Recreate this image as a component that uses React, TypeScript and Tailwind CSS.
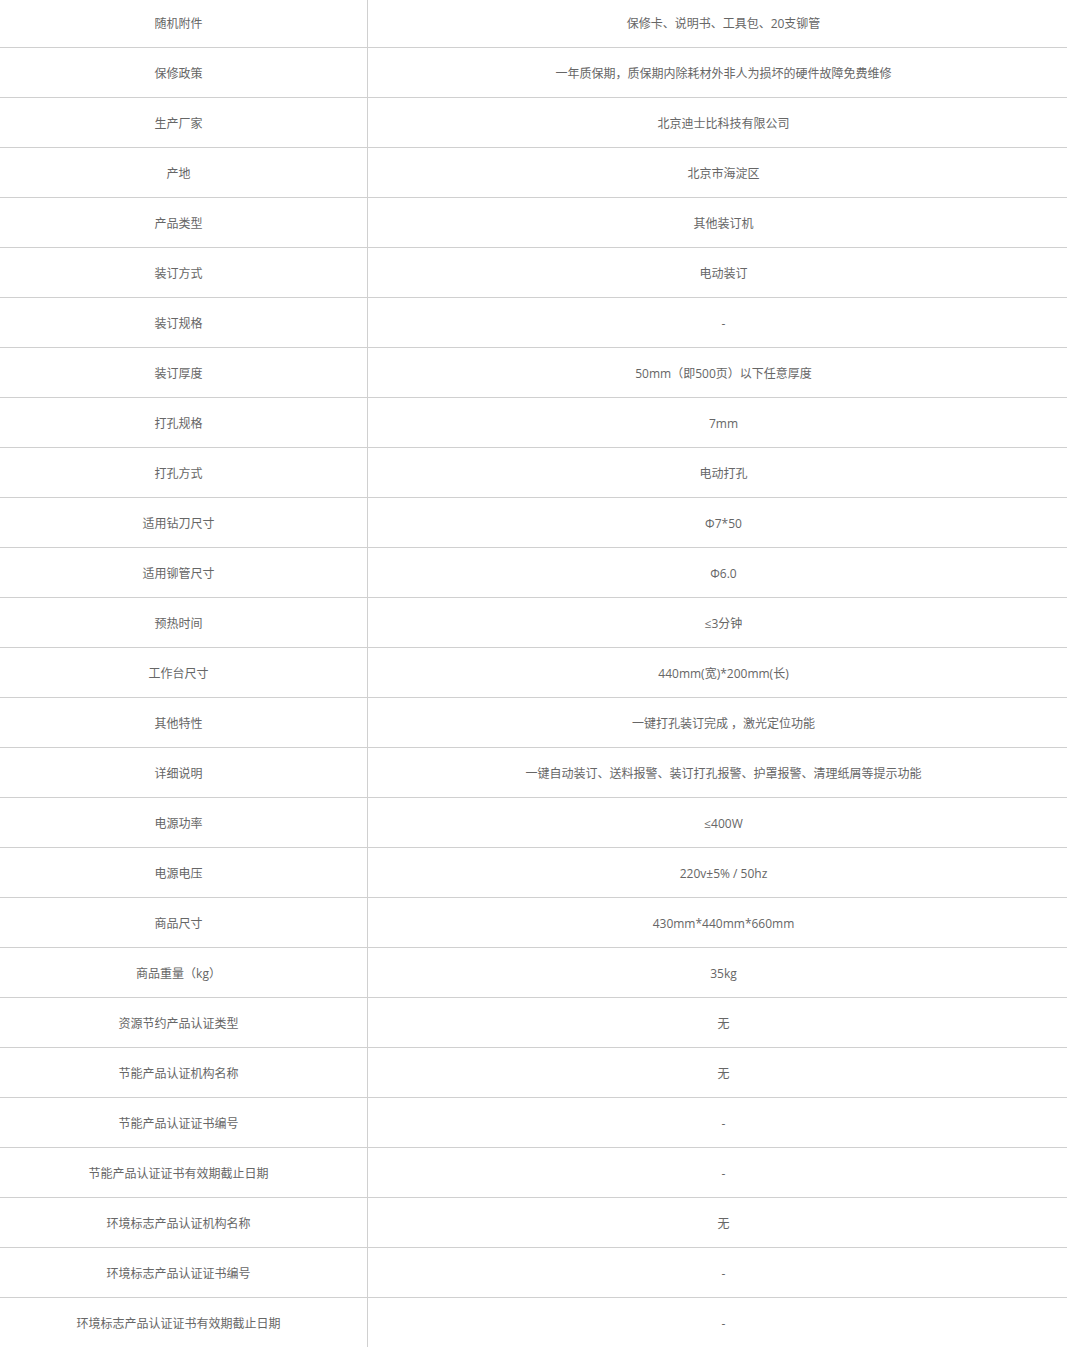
const rows: [string, string][] = [
  ['随机附件', '保修卡、说明书、工具包、20支铆管'],
  ['保修政策', '一年质保期，质保期内除耗材外非人为损坏的硬件故障免费维修'],
  ['生产厂家', '北京迪士比科技有限公司'],
  ['产地', '北京市海淀区'],
  ['产品类型', '其他装订机'],
  ['装订方式', '电动装订'],
  ['装订规格', '-'],
  ['装订厚度', '50mm（即500页）以下任意厚度'],
  ['打孔规格', '7mm'],
  ['打孔方式', '电动打孔'],
  ['适用钻刀尺寸', 'Φ7*50'],
  ['适用铆管尺寸', 'Φ6.0'],
  ['预热时间', '≤3分钟'],
  ['工作台尺寸', '440mm(宽)*200mm(长)'],
  ['其他特性', '一键打孔装订完成 ，激光定位功能'],
  ['详细说明', '一键自动装订、送料报警、装订打孔报警、护罩报警、清理纸屑等提示功能'],
  ['电源功率', '≤400W'],
  ['电源电压', '220v±5% / 50hz'],
  ['商品尺寸', '430mm*440mm*660mm'],
  ['商品重量（kg）', '35kg'],
  ['资源节约产品认证类型', '无'],
  ['节能产品认证机构名称', '无'],
  ['节能产品认证证书编号', '-'],
  ['节能产品认证证书有效期截止日期', '-'],
  ['环境标志产品认证机构名称', '无'],
  ['环境标志产品认证证书编号', '-'],
  ['环境标志产品认证证书有效期截止日期', '-'],
];

export default function App() {
  return (
    <div
      className="w-[1067px] h-[1347px] overflow-hidden bg-white text-[12px] text-[#666]"
      style={{ fontFamily: '"Open Sans", "Noto Sans CJK SC", sans-serif' }}
    >
      <div className="-mt-[2px]">
        {rows.map(([k, v]) => (
          <div key={k} className="flex h-[50px] border-b border-[#d0d0d0]">
            <div className="w-[368px] shrink-0 flex items-center justify-center pt-[3px] pr-[10px] border-r border-[#d0d0d0]">
              {k}
            </div>
            <div className="flex-1 flex items-center justify-center pt-[3px] pl-[12px]">
              {v}
            </div>
          </div>
        ))}
      </div>
    </div>
  );
}
